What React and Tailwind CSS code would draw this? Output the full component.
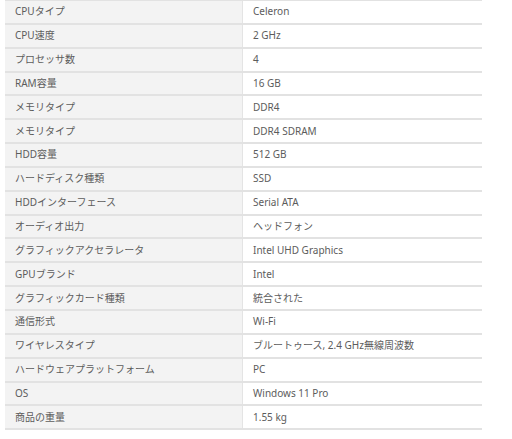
import React from 'react';

const specs = [
  ['CPUタイプ', 'Celeron'],
  ['CPU速度', '2 GHz'],
  ['プロセッサ数', '4'],
  ['RAM容量', '16 GB'],
  ['メモリタイプ', 'DDR4'],
  ['メモリタイプ', 'DDR4 SDRAM'],
  ['HDD容量', '512 GB'],
  ['ハードディスク種類', 'SSD'],
  ['HDDインターフェース', 'Serial ATA'],
  ['オーディオ出力', 'ヘッドフォン'],
  ['グラフィックアクセラレータ', 'Intel UHD Graphics'],
  ['GPUブランド', 'Intel'],
  ['グラフィックカード種類', '統合された'],
  ['通信形式', 'Wi-Fi'],
  ['ワイヤレスタイプ', 'ブルートゥース, 2.4 GHz無線周波数'],
  ['ハードウェアプラットフォーム', 'PC'],
  ['OS', 'Windows 11 Pro'],
  ['商品の重量', '1.55 kg'],
];

export default function App() {
  return (
    <div
      className="w-[512px] h-[439px] bg-white overflow-hidden"
      style={{ fontFamily: '"Noto Sans", "Noto Sans CJK JP", sans-serif' }}
    >
      <div className="ml-[5px] w-[477px] -mt-[1px] border-t-2 border-[#e2e2e2]">
        {specs.map(([label, value], i) => (
          <div key={i} className="flex h-[23.85px] border-b-2 border-[#e2e2e2] text-[10px] text-[#5c5c5c]">
            <div className="w-[238px] bg-[#f3f3f3] border-r border-[#e4e4e4] pl-[10px] flex items-center">
              {label}
            </div>
            <div className="flex-1 pl-[10px] flex items-center">
              {value}
            </div>
          </div>
        ))}
      </div>
    </div>
  );
}
